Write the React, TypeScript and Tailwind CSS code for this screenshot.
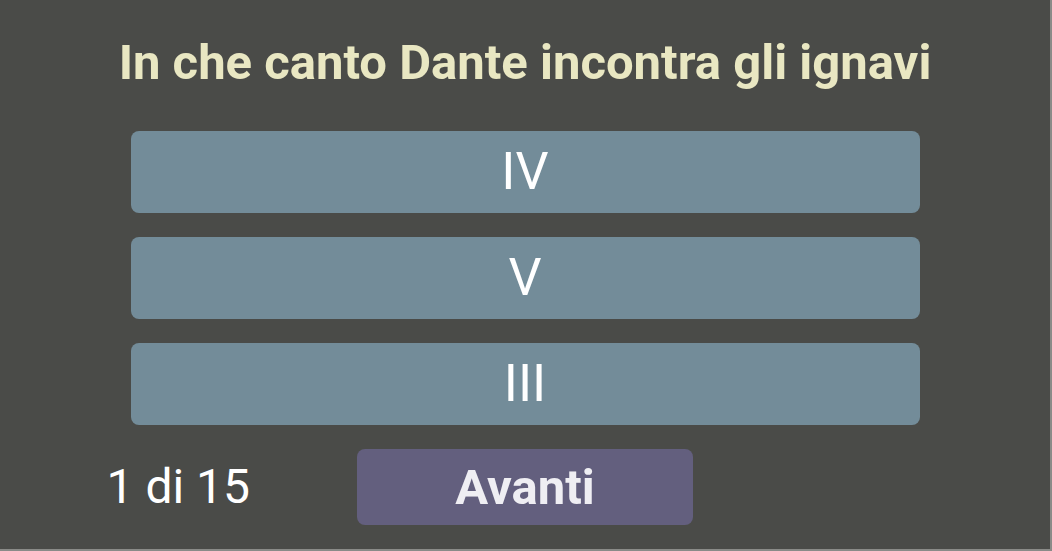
import React from "react";

const answers = ["IV", "V", "III"];

const App = () => {
  return (
    <div
      className="h-[551px] w-[1052px] overflow-hidden bg-[#4a4b48] border-r-2 border-b-2 border-[#8a8b88] flex flex-col items-center"
      style={{ fontFamily: "Roboto, 'Noto Sans', sans-serif" }}
    >
      <h1 className="mt-[33px] text-[49px] leading-[60px] font-bold text-[#e9e7c2] whitespace-nowrap">
        In che canto Dante incontra gli ignavi
      </h1>
      <div className="mt-[38px] flex w-[789px] flex-col gap-[24px]">
        {answers.map((a) => (
          <button
            key={a}
            className="h-[82px] w-full rounded-[8px] bg-[#738c99] text-[52px] text-white leading-none"
          >
            {a}
          </button>
        ))}
      </div>
      <div className="mt-[24px] grid w-full grid-cols-[1fr_336px_1fr] items-center">
        <div className="flex justify-end pr-[107px] text-[48px] text-white leading-none">
          1 di 15
        </div>
        <button className="h-[76px] rounded-[8px] bg-[#635f7e] text-[49px] font-bold text-[#efeef3] leading-none">
          Avanti
        </button>
        <div />
      </div>
    </div>
  );
};

export default App;
